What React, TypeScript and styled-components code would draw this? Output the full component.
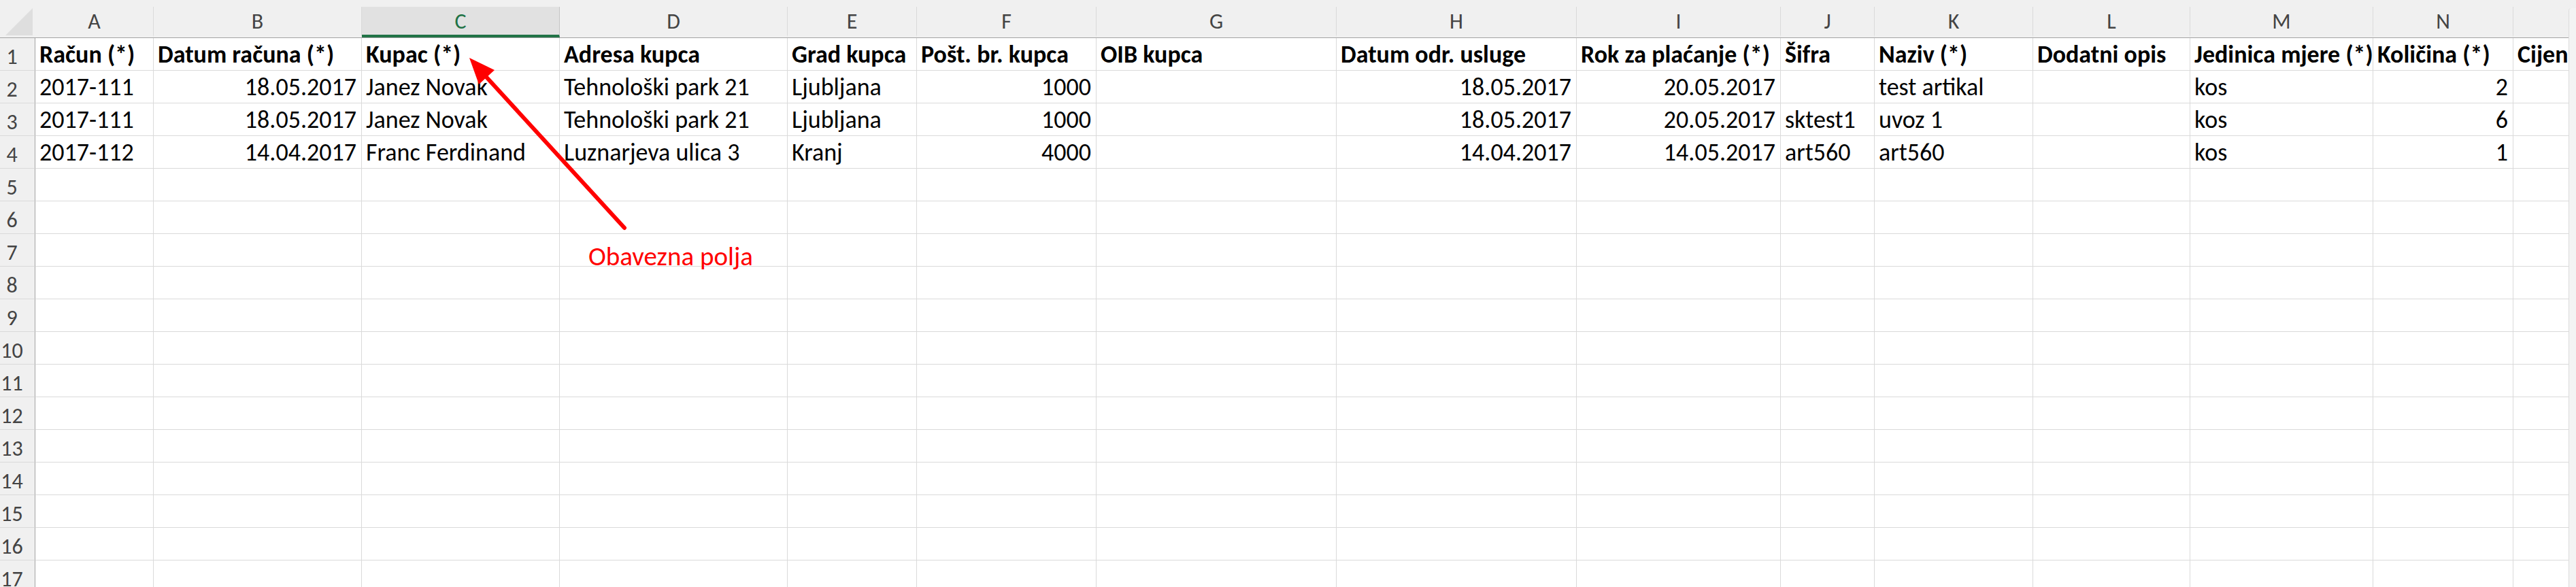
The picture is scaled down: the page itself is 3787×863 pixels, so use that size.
import React from "react";
import styled, { createGlobalStyle } from "styled-components";

const FONT = `Carlito, "Liberation Sans", Arial, sans-serif`;

const GlobalStyle = createGlobalStyle`
  html, body {
    margin: 0;
    padding: 0;
    background: #ffffff;
    overflow: hidden;
  }
  body {
    font-family: ${FONT};
  }
`;

interface Column {
  letter: string;
  width: number;
  title: string;
  align: "left" | "right";
}

const COLUMNS: Column[] = [
  { letter: "A", width: 174, title: "Račun (*)", align: "left" },
  { letter: "B", width: 306, title: "Datum računa (*)", align: "right" },
  { letter: "C", width: 291, title: "Kupac (*)", align: "left" },
  { letter: "D", width: 335, title: "Adresa kupca", align: "left" },
  { letter: "E", width: 190, title: "Grad kupca", align: "left" },
  { letter: "F", width: 264, title: "Pošt. br. kupca", align: "right" },
  { letter: "G", width: 353, title: "OIB kupca", align: "left" },
  { letter: "H", width: 353, title: "Datum odr. usluge", align: "right" },
  { letter: "I", width: 300, title: "Rok za plaćanje (*)", align: "right" },
  { letter: "J", width: 138, title: "Šifra", align: "left" },
  { letter: "K", width: 233, title: "Naziv (*)", align: "left" },
  { letter: "L", width: 231, title: "Dodatni opis", align: "left" },
  { letter: "M", width: 269, title: "Jedinica mjere (*)", align: "left" },
  { letter: "N", width: 206, title: "Količina (*)", align: "right" },
  { letter: "O", width: 220, title: "Cijena (*)", align: "left" },
];

const DATA: string[][] = [
  ["2017-111", "18.05.2017", "Janez Novak", "Tehnološki park 21", "Ljubljana", "1000", "", "18.05.2017", "20.05.2017", "", "test artikal", "", "kos", "2", ""],
  ["2017-111", "18.05.2017", "Janez Novak", "Tehnološki park 21", "Ljubljana", "1000", "", "18.05.2017", "20.05.2017", "sktest1", "uvoz 1", "", "kos", "6", ""],
  ["2017-112", "14.04.2017", "Franc Ferdinand", "Luznarjeva ulica 3", "Kranj", "4000", "", "14.04.2017", "14.05.2017", "art560", "art560", "", "kos", "1", ""],
];

const TOTAL_ROWS = 18;
const SELECTED = "C";

const Page = styled.div`
  position: relative;
  display: flex;
  height: 863px;
  overflow: hidden;
  background: #f0f0f0;
`;

const Sheet = styled.div`
  width: 3776px;
  flex-shrink: 0;
  overflow: hidden;
  display: flex;
  flex-direction: column;
`;

const ScrollTrack = styled.div`
  flex: 1;
  margin-top: 12px;
  background: #f3f3f3;
  border-left: 1px solid #dcdcdc;
  border-top-left-radius: 4px;
`;

const HeaderBar = styled.div`
  display: flex;
  height: 57px;
  padding-top: 10px;
  box-sizing: border-box;
  background: #f0f0f0;
  border-bottom: 1px solid #a3a3a3;
`;

const Corner = styled.div`
  width: 52px;
  flex-shrink: 0;
  display: flex;
  align-items: flex-end;
  justify-content: flex-end;
  padding: 0 4px 3px 0;
  box-sizing: border-box;
`;

const ColumnHeader = styled.div<{ $width: number; $selected: boolean }>`
  width: ${({ $width }) => $width}px;
  flex-shrink: 0;
  box-sizing: border-box;
  display: flex;
  align-items: center;
  justify-content: center;
  padding-top: 2px;
  font-size: 32px;
  color: ${({ $selected }) => ($selected ? "#217346" : "#444444")};
  background: ${({ $selected }) => ($selected ? "#e1e1e1" : "transparent")};
  border-right: 1px solid ${({ $selected }) => ($selected ? "#c6c6c6" : "#dadada")};
  border-bottom: 4px solid ${({ $selected }) => ($selected ? "#217346" : "transparent")};
  margin-bottom: ${({ $selected }) => ($selected ? "0" : "0")};
`;

const Row = styled.div`
  display: flex;
  height: 48px;
  flex-shrink: 0;
  background: #ffffff;
`;

const RowHeader = styled.div`
  width: 52px;
  flex-shrink: 0;
  box-sizing: border-box;
  display: flex;
  align-items: flex-end;
  justify-content: center;
  padding: 0 16px 0 0;
  font-size: 32px;
  line-height: 1.22;
  color: #444444;
  background: #f0f0f0;
  border-right: 1px solid #a3a3a3;
  border-bottom: 1px solid #dadada;
`;

const Cell = styled.div<{ $width: number; $align: "left" | "right"; $bold?: boolean }>`
  width: ${({ $width }) => $width}px;
  flex-shrink: 0;
  box-sizing: border-box;
  display: flex;
  align-items: flex-end;
  justify-content: ${({ $align }) => ($align === "right" ? "flex-end" : "flex-start")};
  padding: 0 7px 0 6px;
  overflow: hidden;
  white-space: nowrap;
  font-size: 36px;
  line-height: 1.22;
  font-weight: ${({ $bold }) => ($bold ? 700 : 400)};
  color: #000000;
  border-right: 1px solid #dadada;
  border-bottom: 1px solid #dadada;
`;

const Overlay = styled.svg`
  position: absolute;
  left: 0;
  top: 0;
  pointer-events: none;
`;

const Note = styled.div`
  position: absolute;
  left: 865px;
  top: 353px;
  font-size: 39px;
  line-height: 48px;
  color: #ff0000;
  white-space: nowrap;
`;

const App: React.FC = () => {
  const rows = Array.from({ length: TOTAL_ROWS }, (_, i) => i + 1);

  return (
    <>
      <GlobalStyle />
      <Page>
        <Sheet>
          <HeaderBar>
            <Corner>
              <svg width="40" height="40" viewBox="0 0 40 40">
                <polygon points="40,0 40,40 0,40" fill="#dedede" />
              </svg>
            </Corner>
            {COLUMNS.map((col) => (
              <ColumnHeader key={col.letter} $width={col.width} $selected={col.letter === SELECTED}>
                {col.letter}
              </ColumnHeader>
            ))}
          </HeaderBar>

          {rows.map((n) => {
            const values = n === 1 ? COLUMNS.map((c) => c.title) : DATA[n - 2] || [];
            return (
              <Row key={n}>
                <RowHeader>{n}</RowHeader>
                {COLUMNS.map((col, i) => (
                  <Cell
                    key={col.letter}
                    $width={col.width}
                    $align={n === 1 ? "left" : col.align}
                    $bold={n === 1}
                  >
                    {values[i] || ""}
                  </Cell>
                ))}
              </Row>
            );
          })}
        </Sheet>
        <ScrollTrack />

        <Overlay width="3787" height="863" viewBox="0 0 3787 863">
          <line x1="918" y1="335" x2="712" y2="110" stroke="#ff0000" strokeWidth="6" strokeLinecap="round" />
          <polygon points="690,85 727,103 704,124" fill="#ff0000" />
        </Overlay>
        <Note>Obavezna polja</Note>
      </Page>
    </>
  );
};

export default App;
